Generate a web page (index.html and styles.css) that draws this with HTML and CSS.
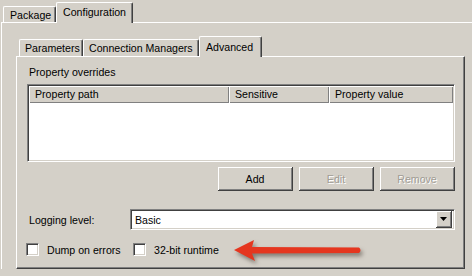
FILE: index.html
```html
<!DOCTYPE html>
<html lang="en">

<head>
    <meta charset="UTF-8">
    <title>Configuration - Advanced</title>
    <link rel="stylesheet" href="styles.css">
</head>

<body>

    <div class="dialog">
        <!-- Outer tabs -->
        <div class="tabs outer-tabs">
            <div class="tab tab-package">Package</div>
            <div class="tab tab-config active">Configuration</div>
        </div>

        <div class="outer-panel">
            <!-- Inner tabs -->
            <div class="tabs inner-tabs">
                <div class="tab tab-params">Parameters</div>
                <div class="tab tab-conn">Connection Managers</div>
                <div class="tab tab-adv active">Advanced</div>
            </div>

            <div class="inner-panel">
                <div class="group-label">Property overrides</div>

                <div class="listview">
                    <div class="lv-header">
                        <div class="col col-path">Property path</div>
                        <div class="col col-sens">Sensitive</div>
                        <div class="col col-val">Property value</div>
                    </div>
                </div>

                <div class="buttons">
                    <button class="btn">Add</button>
                    <button class="btn" disabled>Edit</button>
                    <button class="btn" disabled>Remove</button>
                </div>

                <div class="field-row">
                    <label class="field-label">Logging level:</label>
                    <div class="combo">
                        <span class="combo-text">Basic</span>
                        <span class="combo-btn">
                            <svg width="7" height="4" viewBox="0 0 7 4"><path d="M0 0h7L3.5 4z" fill="#000"/></svg>
                        </span>
                    </div>
                </div>

                <div class="checks">
                    <label class="check check-dump"><span class="box"></span>Dump on errors</label>
                    <label class="check"><span class="box"></span>32-bit runtime</label>
                </div>
            </div>
        </div>

        <!-- annotation arrow -->
        <svg class="arrow" width="140" height="34" viewBox="0 0 140 34">
            <path d="M6 14 L26 4 L24 11 L131 11.5 Q134 14 131 17 L24 17.5 L27 25 Z" fill="#e5361f"/>
        </svg>
    </div>

</body>

</html>
```

FILE: styles.css
```css
body {
    margin: 0;
    background: #d4d0c8;
    font-family: "Liberation Sans", Arial, sans-serif;
    font-size: 10.6px;
    color: #000;
}

.dialog {
    position: relative;
    width: 472px;
    height: 276px;
    overflow: hidden;
}

/* tabs */
.tabs {
    display: flex;
    align-items: flex-end;
}

.tab {
    box-sizing: border-box;
    border-top: 1px solid #fff;
    border-left: 1px solid #fff;
    border-right: 1px solid #404040;
    box-shadow: inset -1px 0 #808080;
    border-radius: 2px 2px 0 0;
    padding: 0 5px;
    line-height: 15px;
    white-space: nowrap;
}

.tab.active {
    position: relative;
    margin-bottom: -1px;
    background: #d4d0c8;
    z-index: 1;
}

.outer-tabs {
    height: 22px;
    padding-left: 3px;
}

.tab-package {
    width: 53px;
    height: 16px;
    padding-left: 6px;
    padding-top: 1px;
}

.tab-config {
    width: 77px;
    height: 21px;
    margin-left: 0;
    padding-left: 6px;
    padding-top: 2px;
}

.outer-panel {
    margin-left: 1px;
    border-top: 1px solid #fff;
    border-left: 1px solid #fff;
    padding: 13px 0 0 14px;
}

.inner-tabs {
    height: 20px;
    padding-left: 3px;
}

.tab-params {
    width: 64px;
    height: 17px;
    padding-top: 1px;
}

.tab-conn {
    width: 116px;
    height: 17px;
    padding-top: 1px;
}

.tab-adv {
    width: 63px;
    height: 21px;
    padding-top: 3px;
    padding-left: 6px;
}

.inner-panel {
    box-sizing: border-box;
    width: 449px;
    height: 213px;
    border-top: 1px solid #fff;
    border-left: 1px solid #fff;
    border-right: 1px solid #404040;
    border-bottom: 1px solid #404040;
    box-shadow: inset -1px -1px #808080;
    padding: 8px 9px 0 10px;
}

.group-label {
    padding-left: 2px;
    line-height: 14px;
    margin-bottom: 5px;
}

/* list view */
.listview {
    box-sizing: border-box;
    height: 78px;
    background: #fff;
    border-top: 1px solid #808080;
    border-left: 1px solid #808080;
    border-right: 1px solid #fff;
    border-bottom: 1px solid #fff;
    box-shadow: inset 1px 1px #404040, inset -1px -1px #d4d0c8;
    padding: 1px;
}

.lv-header {
    display: flex;
    height: 17px;
}

.col {
    box-sizing: border-box;
    background: #d4d0c8;
    box-shadow: inset 1px 1px #fff, inset -1px -1px #808080;
    padding: 2px 0 0 6px;
    line-height: 13px;
}

.col-path {
    width: 200px;
}

.col-sens {
    width: 100px;
}

.col-val {
    flex: 1;
}

/* buttons */
.buttons {
    display: flex;
    justify-content: flex-end;
    gap: 6px;
    margin-top: 5px;
}

.btn {
    box-sizing: border-box;
    width: 75px;
    height: 24px;
    padding: 0;
    font: inherit;
    color: #000;
    background: #d4d0c8;
    border: 0;
    border-right: 1px solid #404040;
    border-bottom: 1px solid #404040;
    box-shadow: inset 1px 1px #fff, inset -1px -1px #808080;
}

.btn:disabled {
    color: #a09c94;
    text-shadow: 1px 1px #fff;
}

/* logging level */
.field-row {
    display: flex;
    align-items: center;
    margin-top: 18px;
}

.field-label {
    width: 101px;
    padding-left: 2px;
}

.combo {
    box-sizing: border-box;
    flex: 1;
    height: 21px;
    display: flex;
    align-items: center;
    background: #fff;
    border-top: 1px solid #808080;
    border-left: 1px solid #808080;
    border-right: 1px solid #fff;
    border-bottom: 1px solid #fff;
    box-shadow: inset 1px 1px #404040, inset -1px -1px #d4d0c8;
    padding: 2px;
}

.combo-text {
    flex: 1;
    padding-left: 2px;
}

.combo-btn {
    box-sizing: border-box;
    width: 16px;
    height: 17px;
    display: flex;
    align-items: center;
    justify-content: center;
    background: #d4d0c8;
    border-right: 1px solid #404040;
    border-bottom: 1px solid #404040;
    box-shadow: inset 1px 1px #fff, inset -1px -1px #808080;
}

/* checkboxes */
.checks {
    display: flex;
    align-items: center;
    margin-top: 13px;
    margin-left: -1px;
}

.check {
    display: flex;
    align-items: center;
    gap: 8px;
}

.check-dump {
    width: 107px;
}

.box {
    box-sizing: border-box;
    width: 13px;
    height: 13px;
    background: #fff;
    border-top: 1px solid #808080;
    border-left: 1px solid #808080;
    border-right: 1px solid #fff;
    border-bottom: 1px solid #fff;
    box-shadow: inset 1px 1px #404040, inset -1px -1px #d4d0c8;
}

.arrow {
    position: absolute;
    left: 228px;
    top: 236px;
    filter: drop-shadow(2px 3px 2px rgba(60, 50, 40, 0.55));
}
```
